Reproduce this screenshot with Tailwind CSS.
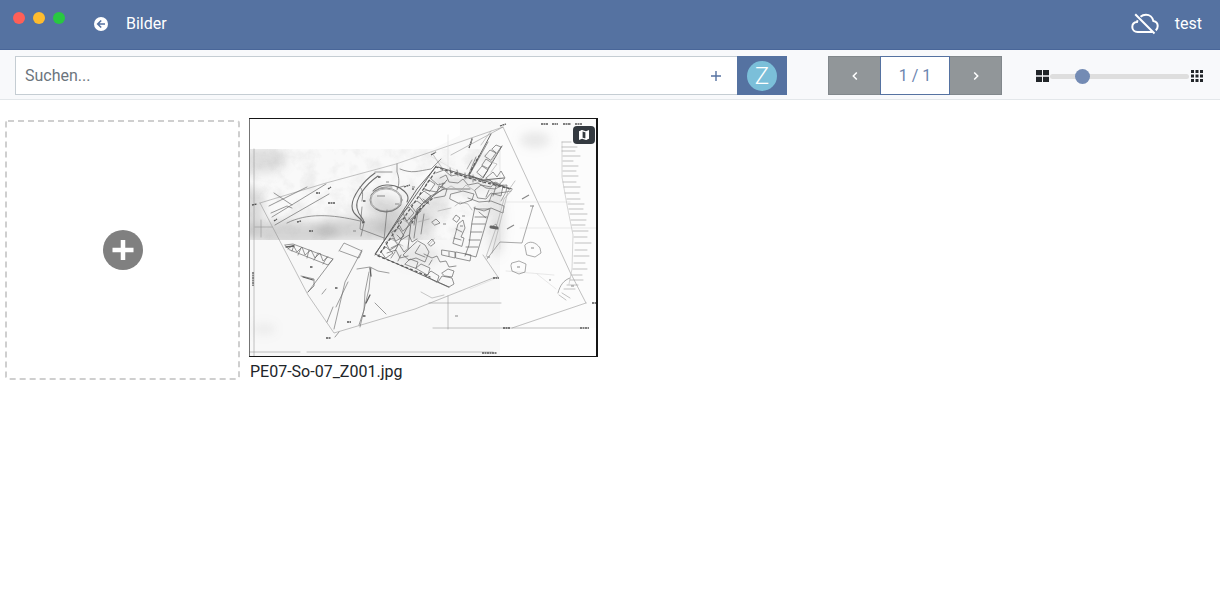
<!DOCTYPE html>
<html lang="de">
<head>
<meta charset="utf-8">
<meta name="viewport" content="width=device-width, initial-scale=1">
<title>Bilder</title>
<script src="https://cdn.jsdelivr.net/npm/@tailwindcss/browser@4"></script>
</head>
<body class="min-h-screen bg-white font-['Roboto',sans-serif] text-base text-[#212529]">
<header class="flex h-[50px] items-center border-b border-[#496699] bg-[#5572a1] pr-[18px] pb-px pl-[13px] text-white">
  <div class="flex gap-2 self-start pt-3" aria-hidden="true">
    <span class="size-3 rounded-full bg-[#ff5f57]"></span>
    <span class="size-3 rounded-full bg-[#febc2e]"></span>
    <span class="size-3 rounded-full bg-[#28c840]"></span>
  </div>
  <nav class="ml-[29px] flex items-center gap-[18px]">
    <button type="button" aria-label="Zurück" class="block size-[14px]">
      <svg viewBox="0 0 14 14" class="size-[14px]"><circle cx="7" cy="7" r="7" fill="#fff"/><path d="M11 7H4M7.200 3.500 3.700 7l3.500 3.500" fill="none" stroke="#5572a1" stroke-width="1.600"/></svg>
    </button>
    <h1 class="font-normal">Bilder</h1>
  </nav>
  <div class="ml-auto flex items-center gap-4">
    <svg viewBox="0 0 28 22" class="h-[22px] w-7" fill="none" stroke="#fff" stroke-width="2" role="img" aria-label="Nicht synchronisiert"><path d="M6.700 7.200A8 8 0 0 0 6 9C3 9.200 1.300 11.300 1.300 14c0 2.900 2.200 5 5.300 5h15"/><path d="M9.500 3.800C11 2.400 12.900 1.700 15 1.700c3.700 0 6.600 2.600 7.300 6.200 2.700.400 4.400 2.400 4.400 5.200 0 1.800-.7 3.300-2 4.300"/><path d="M4.200 1.200 23.500 20.500"/></svg>
    <span>test</span>
  </div>
</header>

<div class="flex h-[50px] items-center border-b border-[#e3e7ea] bg-[#f8f9fb] pt-[2px] pr-[17px] pl-[15px]">
  <form class="flex h-[39px] min-w-0 flex-1" role="search">
    <div class="flex min-w-0 flex-1 items-center border border-r-0 border-[#c5cdd3] bg-white">
      <input type="text" aria-label="Suchen" placeholder="Suchen..." class="h-full min-w-0 flex-1 px-[9px] outline-none placeholder:text-[#6c757d]">
      <button type="button" aria-label="Filter hinzufügen" class="grid h-full w-[42px] place-items-center"><svg viewBox="0 0 10 10" class="size-[10px]" stroke="#5572a1" stroke-width="1.400"><path d="M5 0v10M0 5h10"/></svg></button>
    </div>
    <button type="button" aria-label="Kategorie Zeichnung" class="grid w-[50px] place-items-center bg-[#5572a1]"><span class="grid size-[30px] place-items-center rounded-full bg-[#7bbfd9] text-2xl leading-[30px] font-light text-white">Z</span></button>
  </form>
  <div class="ml-[41px] flex h-[39px]">
    <button type="button" aria-label="Vorherige Seite" class="grid w-[52px] place-items-center border border-r-0 border-[#82888c] bg-[#919699]"><svg viewBox="0 0 6 8" class="h-2 w-[6px]" fill="none" stroke="#fff" stroke-width="1.500"><path d="M4.800.5 1.300 4l3.500 3.500"/></svg></button>
    <span class="flex w-[70px] items-center justify-center border border-[#5572a1] bg-white text-[#6c85af]">1 / 1</span>
    <button type="button" aria-label="Nächste Seite" class="grid w-[52px] place-items-center border border-l-0 border-[#82888c] bg-[#919699]"><svg viewBox="0 0 6 8" class="h-2 w-[6px]" fill="none" stroke="#fff" stroke-width="1.500"><path d="M1.200.5 4.700 4 1.200 7.500"/></svg></button>
  </div>
  <div class="ml-[34px] flex items-center">
    <svg viewBox="0 0 13 12" class="mr-px h-3 w-[13px]" fill="#212529" aria-hidden="true"><path d="M0 0h6v5.300H0zM7 0h6v5.300H7zM0 6.700h6V12H0zM7 6.700h6V12H7z"/></svg>
    <input type="range" min="0" max="100" value="20" aria-label="Bildgröße" class="mt-px h-[15px] w-[139px] appearance-none bg-transparent [&::-webkit-slider-runnable-track]:h-[5px] [&::-webkit-slider-runnable-track]:rounded-full [&::-webkit-slider-runnable-track]:bg-[#dedede] [&::-webkit-slider-thumb]:mt-[-5px] [&::-webkit-slider-thumb]:size-[15px] [&::-webkit-slider-thumb]:appearance-none [&::-webkit-slider-thumb]:rounded-full [&::-webkit-slider-thumb]:bg-[#738bb4]">
    <svg viewBox="0 0 12 12" class="ml-[2px] size-3" fill="#212529" aria-hidden="true"><path d="M0 0h3v3H0zM4.500 0h3v3h-3zM9 0h3v3H9zM0 4.500h3v3H0zM4.500 4.500h3v3h-3zM9 4.500h3v3H9zM0 9h3v3H0zM4.500 9h3v3h-3zM9 9h3v3H9z"/></svg>
  </div>
</div>

<main class="flex flex-wrap items-start gap-[9px] px-[5px] pt-[18px]">
  <button type="button" aria-label="Bild hinzufügen" class="relative mt-[2px] grid h-[260px] w-[235px] place-items-center">
    <svg class="absolute inset-0 size-full" fill="none" aria-hidden="true"><rect x="1" y="1" width="233" height="258" rx="2" stroke="#cfcfcf" stroke-width="2" stroke-dasharray="6 4"/></svg>
    <svg viewBox="0 0 40 40" class="size-10"><circle cx="20" cy="20" r="20" fill="#808080"/><path d="M20 10v20M9.500 20h21" stroke="#fff" stroke-width="4.500"/></svg>
  </button>
  <figure>
    <div class="relative">
    <svg viewBox="249 118 349 239" class="block h-[239px] w-[349px]" role="img" aria-label="Grabungsplan" fill="none" stroke-linecap="round" stroke-linejoin="round">
      <defs>
        <filter id="soft" x="-50%" y="-50%" width="200%" height="200%"><feGaussianBlur stdDeviation="5"/></filter>
        <filter id="grain" x="0" y="0" width="100%" height="100%"><feTurbulence type="fractalNoise" baseFrequency=".06" numOctaves="5" seed="4"/><feColorMatrix values="0 0 0 0 .45  0 0 0 0 .45  0 0 0 0 .45  1.100 0 0 0 -.48"/></filter>
        <clipPath id="sheet"><path d="M250 149H432L460 135V119H597V328H500V356H250z"/></clipPath>
        <clipPath id="band"><path d="M250 149h250v91H250z"/></clipPath>
      </defs>
      <path fill="#fefefe" d="M249 118h349v239H249z"/>
      <g clip-path="url(#sheet)">
        <path fill="#f9f9f9" d="M250 149H432L460 135V119H597V240H250z"/>
        <path fill="#f8f8f8" d="M250 240h250v116H250z"/><path fill="#fcfcfc" d="M500 119h97v209h-97z"/>
        <g filter="url(#soft)" fill="#999">
          <ellipse cx="431" cy="207" rx="17" ry="12" opacity=".2"/><ellipse cx="497" cy="223" rx="8" ry="34" opacity=".22"/>
          <ellipse cx="535" cy="140" rx="15" ry="8" opacity=".2"/><ellipse cx="462" cy="184" rx="30" ry="9" opacity=".16"/>
          <ellipse cx="417" cy="256" rx="22" ry="10" opacity=".18"/><ellipse cx="264" cy="329" rx="12" ry="6" opacity=".12"/>
        </g>
        <g clip-path="url(#band)">
          <g filter="url(#soft)" fill="#999">
            <ellipse cx="263" cy="160" rx="24" ry="13" opacity=".28"/><ellipse cx="250" cy="210" rx="14" ry="24" opacity=".3"/>
            <ellipse cx="290" cy="233" rx="50" ry="12" opacity=".38"/><ellipse cx="356" cy="229" rx="42" ry="12" opacity=".38"/>
            <ellipse cx="383" cy="206" rx="18" ry="10" opacity=".3"/><ellipse cx="405" cy="225" rx="30" ry="16" opacity=".3"/>
          </g>
          <path filter="url(#grain)" opacity=".4" d="M250 149h250v91H250z"/>
        </g>
      </g>

      <!-- Survey boundary and reference lines -->
      <g stroke="#8f8f8f" stroke-width=".55">
        <path d="M254 149v207M250 352h50M307 352h186M260 203l66-20 70-19 107-37 67 145 16 31M260 203l48 92 26 38 81-24 78-31 5-1-15-22M503 127l-52 28M432 153l10 15M512 328l74-25M429 303h72M448 296v33M433 328h147M255 227h17M261 220v17"/>
      </g>
      <g stroke="#d4d4d4" stroke-width=".5">
        <path d="M448 135v48M500 149v100M506 202h64M520 228h77M502 200l10-10M430 156l68 38M506 271l48 4M470 289l24-10M537 274l19 15"/>
      </g>

      <!-- Western paths and terrain -->
      <g stroke="#6d6d6d" stroke-width=".7">
        <path d="M326 184 272 217M329 194 275 225M269 206l38-19M271 213l16-7 5 2M274 193l18 12M287 223c20-10 44-9 73-2"/>
        <path d="M397 164v8c2 5 3 12 0 18M400 169c12 5 18 2 31 0l10-10M375 172h17M361 236l3-13M384 240l3-30M362 207l-2 22 24 9"/>
        <path stroke-width="1.100" d="M375 173c-13 9-23 24-23 33s7 10 11 16M378 176c-13 9-23 23-21 32s6 9 7 14M373 191c7-8 20-7 27-3 6 4 10 8 7 14"/>
        <ellipse cx="386" cy="200" rx="16" ry="12"/>
        <ellipse cx="386" cy="200" rx="15" ry="11" stroke="#999"/>
        <path d="M371 195c4-6 11-9 21-8M376 209c9 5 18 3 25-4M360 187c3 3 3 8 2 14M397 188l7-2"/>
      </g>

      <!-- Southern road -->
      <g stroke="#6c6c6c" stroke-width=".7">
        <path d="M285 245l8-1 40 15-5 6-38-15zM294 245l-2 6M301 248l-3 7M309 250l-2 8M318 253l-4 7M327 257l-4 7M333 259l-25 33M301 276l13 3v7l-6 6"/>
        <path d="m288 249 5-4 4 7 5-5 3 8 6-5 4 8 5-5 3 8 5-4"/>
        <path d="m339 251 5-8 18 8-3 7-19-7M362 250l-17 32-11 47M371 268l-2 21-3 12-6 26M369 272l-4 20-1 18-5 15M357 269l13-2 8 4 11 2M348 282l-12 25M333 307l-6 15M375 303l11 11M326 289l-4 5M339 332l-4 5" stroke-width=".65"/>
      </g>
      <path stroke="#606060" stroke-width="1.300" d="m286 247 8-1M303 277l10 3M370 268l1 8M370 295l-4 8"/>

      <!-- Main building walls -->
      <g stroke="#5a5a5a" stroke-width=".9">
        <path d="m436 166-61 88 74 33M438 167l74 22M491 134l-22 41M502 146l-19 32M468 175l15 5 21-2M375 255l42-66 19-22"/>
        <path stroke="#707070" d="m447 180-37 42-15 29M470 189h-27l-21 15-11 18-3 26"/>
      </g>
      <g stroke="#666" stroke-width=".7">
        <path d="m436 173 8-3 7 6 9-2 6 4 8-1 6 4 10-1 6 6 11-1-1 7-14 2-3 8M440 178l6-3 3 7 9 1 5-4 5 6 10-2 8 5 9 1 8-4M430 178l8 7 7-2M425 190l12 2 2-6 8 3-2 7-11 2"/>
        <path d="m424 188 5-8 6 4-5 7zM419 196l5-5 7 5-6 7zM411 205l6-4 7 5-7 7zM403 212l6-5 5 6-7 8zM398 222l6-4 6 7-7 6zM392 232l7-4 5 8-8 5zM386 242l7-4 5 7-8 5zM381 251l5-4 7 6-7 5z"/>
        <path d="m492 149 4-4 5 2-4 6zM485 156l5-6 6 3-5 7zM482 165l4-6 6 4-4 5zM477 172l5-6 6 4-5 7zM486 178l7-6 4 5 4-6 4 7-6 7zM470 174l9-16 9-16M476 157l-6 14"/>
        <path d="m451 194 12-3 11 3-2 6-12 4-10-5zM475 190l6-5 10 2 4-5 8 4-2 10-10-3-5 6-8-1zM468 198l11 4 12-1 13 5-1 7-12-5-7 3-10-3M489 190l-3 7M497 183l-4 13"/>
        <path d="m414 225 3-16 12-12 15-8M411 219l10-8M414 238l4-28M421 234l3-20M432 222l4-3 4 4-5 2zM453 219l3-4 4 3-3 4zM428 243l4-4 3 4-4 3z"/>
        <path d="m475 207-3 15-3 23-4 11M490 209l-6 21-8 27-11-3M476 209h13M475 217h12M472 224h13M471 232h11M469 240h11M466 247h12M479 212l7 6"/>
        <path d="m453 243 5-19 5-4 2 8-4 9 3 1-2 8zM456 229l6 3M454 238l7 2M442 250l13 2v6l-13-3zM456 252l15 3-1 6-14-3zM449 252v4"/>
        <path d="m418 241 7 4 4 7-4 10-9-4-7 2-6-5 9-9zM420 245l-5 8 10 4M424 254l8 4 5-2 3 6 6-1 3 6 7-1M432 260l-3 5"/>
        <path d="m405 264 5-5 8 3-2 6zM416 268l5-4 9 4-2 7zM426 276l5-5 8 5-2 6zM438 282l4-6 10 2 2 6-5 3zM442 273l6-4 6 2-2 6-7-1zM387 253l9-3 4 8 8-2M391 248l8-4 5 8 5-4M401 240l8-5 3 7 5-3"/>
        <path d="m450 168 1 7M457 170l1 6M465 173v6M473 175v7M481 178l2 5M391 258l4-6M398 261l3-6M397 235l4 4M409 218l4 5M423 199l6 5M443 183l-1 5"/>
      </g>
      <g stroke="#5c5c5c" stroke-width="1.300" stroke-dasharray="2 3"><path d="m436 167 36 12 38 10M435 172l-56 83M378 256l52 21M412 223l8-14 13-11M469 174l10-18"/></g>
      <g stroke="#a2a2a2" stroke-width=".6"><path d="m439 183 7 6 5-3 9 5 6-6 9 6M455 206l5-4 8 2 4 6M438 211l13-3M418 222l11-3M434 239l-5 6M500 149l-9 13 6 2-6 8M512 190l-8 9-8 29-10 29M515 181l-7 10-9 36-7 26M421 292l11 6 12-3M402 219l7 5M391 239l12 7M481 145l10-14"/></g>

      <!-- Eastern features -->
      <g stroke="#7b7b7b" stroke-width=".65">
        <path d="m533 206-11 37-22-1-13 17M525 245c4-5 11-3 15 3l1 5-6 4-8-2zM512 263l7-2 7 3-1 8-6 2-7-3-1-5zM558 293c2-8 6-13 12-15"/>
        <path d="M493 226l3-2 2 5M501 201l5-9 5-1M467 169l5-9"/>
      </g>
      <path d="m491 227 6 1" stroke="#666" stroke-width="3"/>
      <g stroke="#bcbcbc" stroke-width=".6">
        <path d="M562 142v35l5 28 6 30-1 34-3 15"/>
        <path stroke="#989898" d="M562 142h9M562 147h15M562 151h13M563 156h17M563 161h10M563 166h15M563 171h13M563 176h15M563 182h13M564 187h16M565 193h14M567 199h13M568 204h16M569 209h14M570 214h17M571 220h15M572 225h13M573 231h15M574 237h13M575 243h16M575 250h12M574 256h15M574 263h11M573 269h14M572 275h10M570 280h13M567 285h11M564 289h11M562 293l8 5M559 295l7 5"/>
      </g>

      <!-- Survey labels, levels and sheet notes -->
      <g stroke="#555" stroke-width="1.300" stroke-linecap="butt" stroke-dasharray="2 .5">
        <path d="M541 124h7M552 124h6M563 124h8M575 124h7M482 353h15M503 328h7M580 328h9M326 338h5M592 303h4M493 278h6M500 126l6-2M431 155l5-3M252 205l5-1M316 193h4M328 189l3-2M274 221l3-2M297 222l4-1M328 203h7M309 231h4M378 177h3M363 201h3M362 223l3-1M310 267h3M335 288h3M347 322h4M363 316h3M404 187l6-2M413 190v-2M253 272v14M469 148l3-9"/>
      </g>
      <g stroke="#888" stroke-width="1.200" stroke-linecap="butt"><path d="M412 187h3M386 182h3M377 196h8M395 204h4M353 231h3M471 144l1-6M462 216h3M460 226h3M487 257h3M531 248h3M517 267h3M549 280h2M571 286h3M522 199l7-4M507 229l7-4M530 206h4M455 316h3M443 224h3"/></g>
      <path d="M249.500 118.500H597v238H249.500z" stroke="#161616"/><path d="M597 118v239" stroke="#161616" stroke-width="2"/>
    </svg>
    <span class="absolute top-2 right-[3px] grid h-[18px] w-[22px] place-items-center rounded bg-[#343a40]" role="img" aria-label="Georeferenziert"><svg viewBox="0 0 10 10" class="size-[10px]"><path fill="#fff" d="M0 1.300 3 0v8.700L0 10zM7 1.300 10 0v8.700L7 10z"/><path d="M3 .6 7 1.900v7.500L3 8.100z" fill="none" stroke="#fff" stroke-width="1.200"/></svg></span>
    </div>
    <figcaption class="pt-[3px] pl-px leading-6">PE07-So-07_Z001.jpg</figcaption>
  </figure>
</main>
</body>
</html>
